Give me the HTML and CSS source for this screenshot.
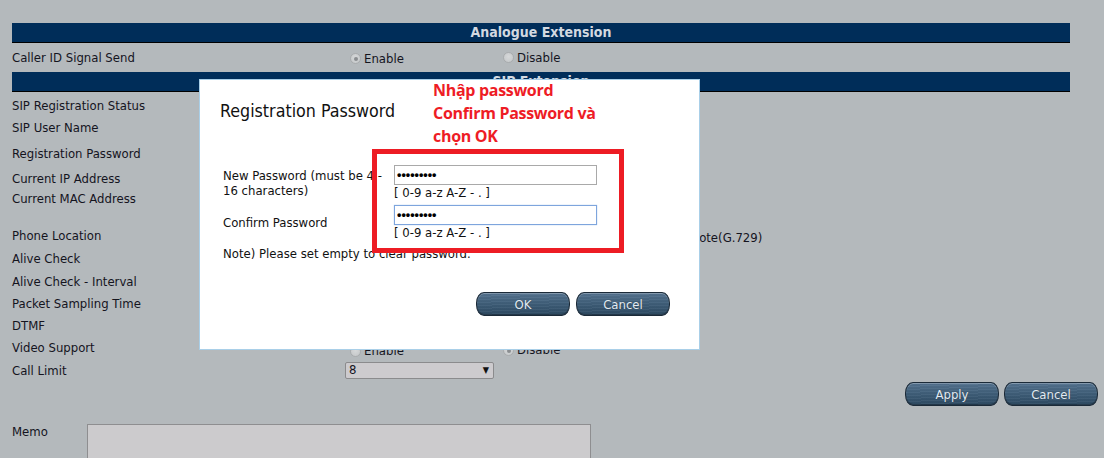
FILE: index.html
```html
<!DOCTYPE html>
<html lang="en">
<head>
<meta charset="utf-8">
<title>Analogue Extension</title>
<link rel="stylesheet" href="styles.css">
</head>
<body>
<div class="page">
  <div class="section-head">Analogue Extension</div>
  <div class="row row-caller">
    <div class="label">Caller ID Signal Send</div>
    <div class="value">
      <span class="radio opt"><span class="dot checked"></span>Enable</span>
      <span class="radio"><span class="dot"></span>Disable</span>
    </div>
  </div>
  <div class="section-head">SIP Extension</div>
  <div class="rows">
    <div class="row h22"><div class="label">SIP Registration Status</div><div class="value"></div></div>
    <div class="row h26"><div class="label">SIP User Name</div><div class="value"></div></div>
    <div class="row h25"><div class="label">Registration Password</div><div class="value"></div></div>
    <div class="row h20"><div class="label">Current IP Address</div><div class="value"></div></div>
    <div class="row h37"><div class="label">Current MAC Address</div><div class="value"></div></div>
    <div class="row h23"><div class="label">Phone Location</div>
      <div class="value low">
        <span class="radio opt-wide"><span class="dot checked"></span>Local</span>
        <span class="radio"><span class="dot"></span>Remote(G.729)</span>
      </div>
    </div>
    <div class="row h23"><div class="label">Alive Check</div><div class="value"></div></div>
    <div class="row h22"><div class="label">Alive Check - Interval</div><div class="value"></div></div>
    <div class="row h22"><div class="label">Packet Sampling Time</div><div class="value"></div></div>
    <div class="row h22"><div class="label">DTMF</div><div class="value"></div></div>
    <div class="row h23"><div class="label">Video Support</div>
      <div class="value low">
        <span class="radio opt"><span class="dot"></span>Enable</span>
        <span class="radio"><span class="dot checked"></span>Disable</span>
      </div>
    </div>
    <div class="row h20"><div class="label">Call Limit</div>
      <div class="value"><div class="select"><span>8</span><span class="arrow">&#9660;</span></div></div>
    </div>
  </div>
  <div class="actions">
    <button class="btn">Apply</button>
    <button class="btn">Cancel</button>
  </div>
  <div class="memo-row">
    <div class="memo-label">Memo</div>
    <div class="memo-box"></div>
  </div>
</div>

<div class="dialog">
  <div class="dlg-title">Registration Password</div>
  <div class="dlg-form">
    <div class="dlg-label">New Password (must be 4 -<br>16 characters)</div>
    <div class="dlg-field">
      <input class="pw" type="password" value="abcdefghi">
      <div class="hint">[ 0-9 a-z A-Z - . ]</div>
    </div>
    <div class="dlg-label">Confirm Password</div>
    <div class="dlg-field">
      <input class="pw focused" type="password" value="abcdefghi">
      <div class="hint">[ 0-9 a-z A-Z - . ]</div>
    </div>
  </div>
  <div class="note">Note) Please set empty to clear password.</div>
  <div class="dlg-actions">
    <button class="btn">OK</button>
    <button class="btn">Cancel</button>
  </div>
</div>

<div class="callout-text">Nhập password<br>Confirm Password và<br>chọn OK</div>
<div class="callout-box"></div>
</body>
</html>
```
FILE: styles.css
```css
html, body {
  margin: 0;
  padding: 0;
}
body {
  background: #b4b9bc;
  font-family: "DejaVu Sans Condensed", "Liberation Sans", sans-serif;
  font-size: 13px;
  color: #14141e;
  width: 1104px;
  height: 458px;
  overflow: hidden;
  position: relative;
}
.page {
  padding: 23px 0 0 12px;
  width: 1058px;
}
.section-head {
  height: 19px;
  background: #002d59;
  border-bottom: 1px solid #000;
  color: #d3d9e1;
  font-weight: bold;
  font-size: 14px;
  line-height: 19px;
  text-align: center;
}
.row {
  display: grid;
  grid-template-columns: 333px 1fr;
  line-height: 16px;
}
.row-caller {
  height: 29px;
  align-items: center;
}
.rows {
  padding-top: 5px;
}
.h20 { height: 20px; }
.h22 { height: 22px; }
.h23 { height: 23px; }
.h25 { height: 25px; }
.h26 { height: 26px; }
.h37 { height: 37px; }
.label {
  padding-top: 1px;
}
.value {
  padding-left: 5px;
  display: flex;
  align-items: center;
  height: 16px;
}
.value.low {
  padding-top: 3px;
}
.radio {
  display: inline-flex;
  align-items: center;
  gap: 3px;
}
.opt { width: 153px; padding-top: 2px; }
.opt-wide { width: 309px; }
.dot {
  width: 11px;
  height: 11px;
  border-radius: 50%;
  border: 1px solid #a9acae;
  background: radial-gradient(circle at 50% 40%, #d6d8d9 0%, #c3c6c8 100%);
  box-sizing: border-box;
  position: relative;
}
.dot.checked::after {
  content: "";
  position: absolute;
  left: 3px;
  top: 3px;
  width: 4px;
  height: 4px;
  border-radius: 50%;
  background: #8a8d90;
}
.select {
  width: 149px;
  height: 17px;
  box-sizing: border-box;
  border: 1px solid #8b8b8d;
  border-radius: 2px;
  background: #cdcbce;
  display: flex;
  justify-content: space-between;
  align-items: center;
  padding: 0 4px 0 3px;
  margin-left: -5px;
  font-size: 13px;
}
.arrow {
  font-size: 9px;
  color: #111;
}
.actions {
  width: 1086px;
  display: flex;
  justify-content: flex-end;
  gap: 5px;
}
.btn {
  width: 94px;
  height: 24px;
  box-sizing: border-box;
  border: 1px solid #1b2a38;
  border-radius: 8px / 11px;
  background:
    repeating-linear-gradient(178deg, rgba(255,255,255,0.04) 0 1px, rgba(0,0,0,0.03) 1px 3px),
    linear-gradient(#557390 0%, #45647f 35%, #3b5a74 60%, #2e4a62 100%);
  box-shadow: inset 0 1px 0 rgba(255,255,255,0.25), inset 0 -1px 0 rgba(0,0,0,0.25);
  color: #e2ebf3;
  font-family: "DejaVu Sans Condensed", "Liberation Sans", sans-serif;
  font-size: 13px;
  padding: 0;
  text-shadow: 0 0 1px rgba(0,0,0,0.4);
}
.memo-row {
  display: flex;
  margin-top: 18px;
  line-height: 16px;
}
.memo-label {
  width: 75px;
}
.memo-box {
  width: 502px;
  height: 50px;
  background: #cccbcd;
  border: 1px solid #8e8e90;
}

/* dialog */
.dialog {
  position: absolute;
  left: 199px;
  top: 79px;
  width: 501px;
  height: 271px;
  box-sizing: border-box;
  background: #fff;
  border: 1px solid #a9cfe8;
  color: #111;
}
.dlg-title {
  font-size: 17.7px;
  line-height: 20px;
  margin: 21px 0 0 20px;
}
.dlg-form {
  margin: 44px 0 0 23px;
  display: grid;
  grid-template-columns: 171px 203px;
  row-gap: 5px;
  align-items: center;
}
.dlg-label {
  line-height: 15px;
}
.dlg-field {
  display: flex;
  flex-direction: column;
}
.pw {
  width: 203px;
  height: 20px;
  box-sizing: border-box;
  border: 1px solid #a9a9a9;
  padding: 0 2px;
  margin: 0;
  font-family: "Liberation Sans", sans-serif;
  font-size: 12.5px;
  font-weight: bold;
  color: #000;
  background: #fff;
  outline: none;
  letter-spacing: 0;
}
.pw.focused {
  border-color: #7ea5dd;
  box-shadow: 0 0 1px #9bbbe6;
}
.hint {
  line-height: 15px;
}
.note {
  margin: 6px 0 0 23px;
  line-height: 16px;
}
.dlg-actions {
  margin-top: 30px;
  padding-right: 29px;
  display: flex;
  justify-content: flex-end;
  gap: 6px;
}

/* annotation overlay */
.callout-text {
  position: absolute;
  left: 433px;
  top: 79px;
  font-family: "Open Sans", "Noto Sans", sans-serif;
  font-weight: bold;
  font-size: 16px;
  line-height: 23px;
  color: #ee1c25;
  letter-spacing: -0.3px;
}
.callout-box {
  position: absolute;
  left: 372px;
  top: 149px;
  width: 252px;
  height: 104px;
  box-sizing: border-box;
  border: 5px solid #ed1c24;
}
```
